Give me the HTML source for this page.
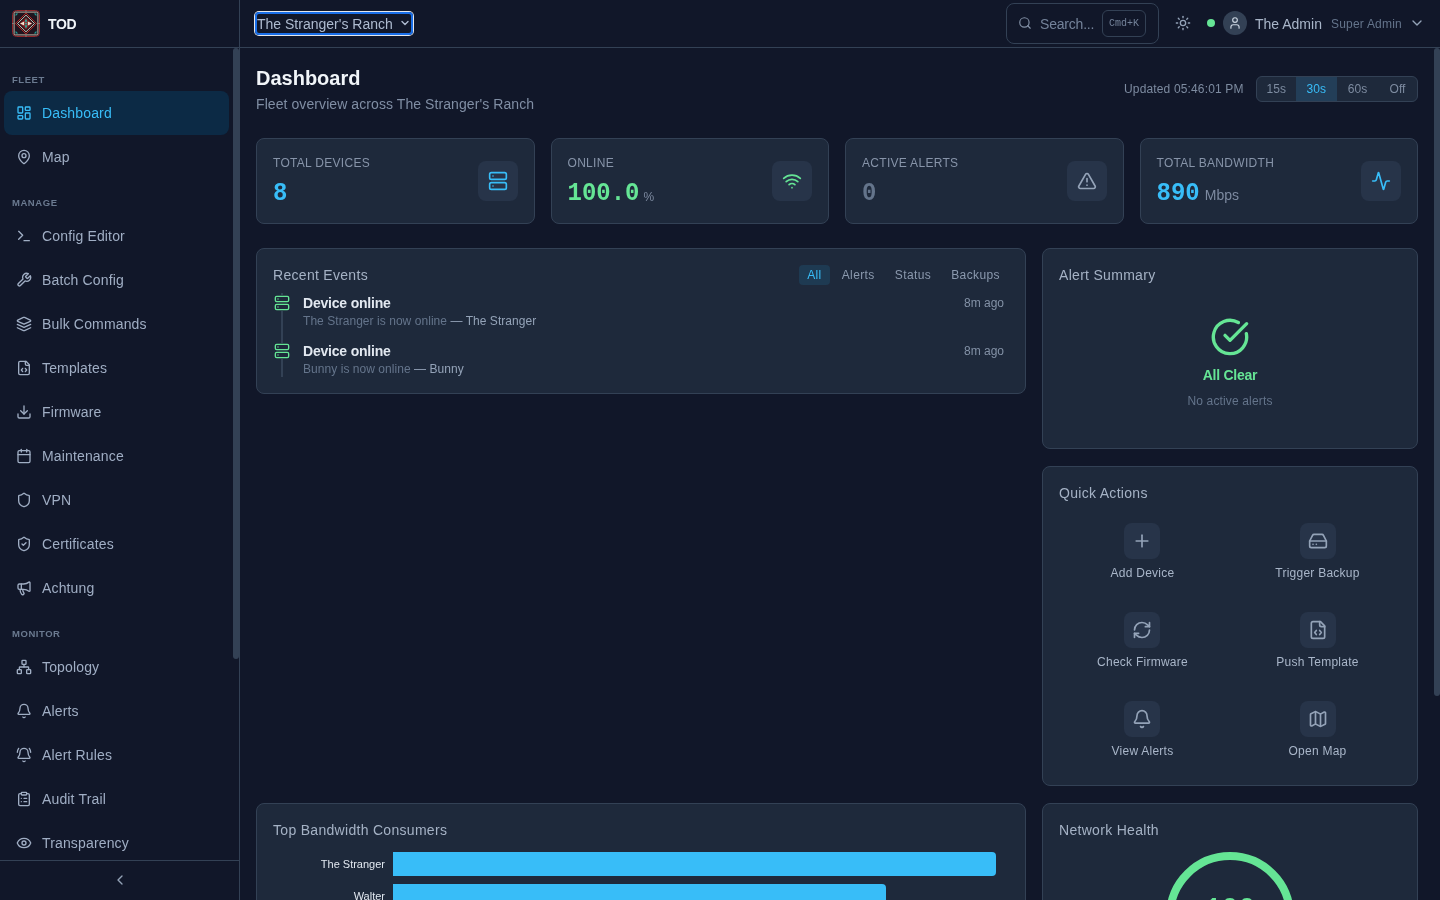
<!DOCTYPE html>
<html><head><meta charset="utf-8">
<style>
*{box-sizing:border-box;margin:0;padding:0}
html,body{width:1440px;height:900px;overflow:hidden;background:#111729;font-family:"Liberation Sans",sans-serif;color:#cbd5e1}
.abs{position:absolute}
svg.i{fill:none;stroke:currentColor;stroke-width:2;stroke-linecap:round;stroke-linejoin:round;display:block}
#hdr{position:absolute;left:0;top:0;width:1440px;height:48px;border-bottom:1px solid #334155;background:#111729}
#side{position:absolute;left:0;top:0;width:240px;height:900px;border-right:1px solid #334155;background:#111729}
.lbl{position:absolute;left:12px;font-size:9.5px;font-weight:bold;letter-spacing:0.55px;color:#6b7a90;line-height:16px;margin-top:0.5px}
.nav{position:absolute;left:4px;width:225px;height:44px;display:flex;align-items:center;padding-left:12px;font-size:14px;color:#a0aec4;border-radius:8px;letter-spacing:0.15px}
.nav svg{width:16px;height:16px;margin-right:10px;flex:none}
.nav.act{background:#0c2a45;color:#38bdf8}
.card{position:absolute;background:#1e293b;border:1px solid #334155;border-radius:8px}
.stat{top:138px;height:86px;width:278.5px}
.stat .t{position:absolute;left:16px;top:16px;font-size:12px;line-height:16px;color:#8794a9;letter-spacing:0.3px}
.stat .v{position:absolute;left:16px;top:38.5px;transform:scaleY(1.1);transform-origin:0 22.4px;font-family:"Liberation Mono",monospace;font-weight:bold;font-size:24px;line-height:32px;white-space:nowrap}
.stat .u{display:inline-block;transform:scaleY(0.91);transform-origin:0 80%;font-family:"Liberation Sans",sans-serif;font-weight:normal;font-size:13px;color:#7d8aa0;margin-left:5px}
.stat .ib{position:absolute;right:16px;top:22px;width:40px;height:40px;border-radius:8px;background:#273449;display:flex;align-items:center;justify-content:center}
.stat .ib svg{width:20px;height:20px}
.qa{position:absolute;width:167px;height:70px}
.qb{position:absolute;left:65px;top:0;width:36px;height:36px;border-radius:8px;background:#273449;color:#94a3b8;display:flex;align-items:center;justify-content:center}
.qb svg{width:20px;height:20px}
.ql{position:absolute;left:0;width:167px;top:42px;text-align:center;font-size:12px;line-height:16px;color:#a9b6c9;white-space:nowrap;letter-spacing:0.25px}
.ptitle{position:absolute;left:16px;top:16px;font-size:14px;line-height:20px;color:#a5b2c5;letter-spacing:0.3px}
</style></head><body><div id="root" style="position:absolute;left:0;top:0;width:1440px;height:900px;will-change:transform">

<!-- SIDEBAR -->
<div id="side">
  <svg class="abs" style="left:12px;top:10px" width="28" height="27" viewBox="0 0 28 27">
    <rect x="0.5" y="0.5" width="27" height="26" rx="4" fill="#20151f" stroke="#92262a" stroke-width="1"/>
    <rect x="2.1" y="2.1" width="23.8" height="22.8" rx="1.2" fill="none" stroke="#bdb3a5" stroke-width="1"/>
    <path d="M14 0v2.5M14 24.5v2.5M0 13.5h2.5M25.5 13.5h2.5" stroke="#8a8580" stroke-width="0.8"/>
    <path d="M3.6 3.6h2.6l-2.6 2.6z M24.4 3.6h-2.6l2.6 2.6z M3.6 23.4h2.6l-2.6-2.6z M24.4 23.4h-2.6l2.6-2.6z" fill="#1c9e97"/>
    <polygon points="14,3.1 24.6,13.5 14,23.9 3.4,13.5" fill="none" stroke="#b42a26" stroke-width="1"/>
    <polygon points="14,5.2 22.5,13.5 14,21.8 5.5,13.5" fill="none" stroke="#ddd3c0" stroke-width="0.9"/>
    <polygon points="14,7.2 20.4,13.5 14,19.8 7.6,13.5" fill="#7e1c1e"/>
    <polygon points="8,13.5 12.2,11.6 12.2,15.4" fill="#efe6d2"/>
    <polygon points="20,13.5 15.8,11.6 15.8,15.4" fill="#efe6d2"/>
    <polygon points="14,8.3 15.4,11.7 12.6,11.7" fill="#27b3a6"/>
    <polygon points="14,18.7 15.4,15.3 12.6,15.3" fill="#27b3a6"/>
    <rect x="12.9" y="12.5" width="2.2" height="2" fill="#27b3a6" stroke="#a3262a" stroke-width="0.5"/>
  </svg>
  <div class="abs" style="left:48px;top:14px;font-size:14px;line-height:20px;font-weight:bold;color:#f1f5f9;letter-spacing:-0.4px">TOD</div>
  <div class="abs" style="left:0;top:47px;width:240px;height:1px;background:#334155"></div>

  <div class="lbl" style="top:71px">FLEET</div>
  <div class="nav act" style="top:91px"><svg class="i" viewBox="0 0 24 24"><rect width="7" height="9" x="3" y="3" rx="1"/><rect width="7" height="5" x="14" y="3" rx="1"/><rect width="7" height="9" x="14" y="12" rx="1"/><rect width="7" height="5" x="3" y="16" rx="1"/></svg>Dashboard</div>
  <div class="nav" style="top:135px"><svg class="i" viewBox="0 0 24 24"><path d="M20 10c0 4.993-5.539 10.193-7.399 11.799a1 1 0 0 1-1.202 0C9.539 20.193 4 14.993 4 10a8 8 0 0 1 16 0"/><circle cx="12" cy="10" r="3"/></svg>Map</div>

  <div class="lbl" style="top:194px">MANAGE</div>
  <div class="nav" style="top:214px"><svg class="i" viewBox="0 0 24 24"><polyline points="4 17 10 11 4 5"/><line x1="12" x2="20" y1="19" y2="19"/></svg>Config Editor</div>
  <div class="nav" style="top:258px"><svg class="i" viewBox="0 0 24 24"><path d="M14.7 6.3a1 1 0 0 0 0 1.4l1.6 1.6a1 1 0 0 0 1.4 0l3.77-3.77a6 6 0 0 1-7.94 7.94l-6.91 6.91a2.120 2.120 0 0 1-3-3l6.91-6.91a6 6 0 0 1 7.94-7.940l-3.76 3.76z"/></svg>Batch Config</div>
  <div class="nav" style="top:302px"><svg class="i" viewBox="0 0 24 24"><path d="M12.83 2.18a2 2 0 0 0-1.66 0L2.6 6.08a1 1 0 0 0 0 1.83l8.58 3.91a2 2 0 0 0 1.66 0l8.58-3.9a1 1 0 0 0 0-1.83Z"/><path d="m22 17.65-9.17 4.16a2 2 0 0 1-1.66 0L2 17.65"/><path d="m22 12.65-9.17 4.160a2 2 0 0 1-1.66 0L2 12.65"/></svg>Bulk Commands</div>
  <div class="nav" style="top:346px"><svg class="i" viewBox="0 0 24 24"><path d="M10 12.5 8 15l2 2.5"/><path d="m14 12.5 2 2.5-2 2.5"/><path d="M14 2v4a2 2 0 0 0 2 2h4"/><path d="M15 2H6a2 2 0 0 0-2 2v16a2 2 0 0 0 2 2h12a2 2 0 0 0 2-2V7z"/></svg>Templates</div>
  <div class="nav" style="top:390px"><svg class="i" viewBox="0 0 24 24"><path d="M21 15v4a2 2 0 0 1-2 2H5a2 2 0 0 1-2-2v-4"/><polyline points="7 10 12 15 17 10"/><line x1="12" x2="12" y1="15" y2="3"/></svg>Firmware</div>
  <div class="nav" style="top:434px"><svg class="i" viewBox="0 0 24 24"><path d="M8 2v4"/><path d="M16 2v4"/><rect width="18" height="18" x="3" y="4" rx="2"/><path d="M3 10h18"/></svg>Maintenance</div>
  <div class="nav" style="top:478px"><svg class="i" viewBox="0 0 24 24"><path d="M20 13c0 5-3.5 7.5-7.66 8.95a1 1 0 0 1-.67-.01C7.5 20.5 4 18 4 13V6a1 1 0 0 1 1-1c2 0 4.5-1.2 6.24-2.72a1.17 1.17 0 0 1 1.52 0C14.51 3.81 17 5 19 5a1 1 0 0 1 1 1z"/></svg>VPN</div>
  <div class="nav" style="top:522px"><svg class="i" viewBox="0 0 24 24"><path d="M20 13c0 5-3.5 7.5-7.66 8.95a1 1 0 0 1-.67-.01C7.5 20.5 4 18 4 13V6a1 1 0 0 1 1-1c2 0 4.5-1.2 6.24-2.72a1.17 1.17 0 0 1 1.52 0C14.51 3.81 17 5 19 5a1 1 0 0 1 1 1z"/><path d="m9 12 2 2 4-4"/></svg>Certificates</div>
  <div class="nav" style="top:566px"><svg class="i" viewBox="0 0 24 24"><path d="M11 6a13 13 0 0 0 8.4-2.8A1 1 0 0 1 21 4v12a1 1 0 0 1-1.6.8A13 13 0 0 0 11 14H5a2 2 0 0 1-2-2V8a2 2 0 0 1 2-2z"/><path d="M6 14a12 12 0 0 0 2.4 7.2 2 2 0 0 0 3.2-2.4A8 8 0 0 1 10 14"/><path d="M8 6v8"/></svg>Achtung</div>

  <div class="lbl" style="top:625px">MONITOR</div>
  <div class="nav" style="top:645px"><svg class="i" viewBox="0 0 24 24"><rect x="16" y="16" width="6" height="6" rx="1"/><rect x="2" y="16" width="6" height="6" rx="1"/><rect x="9" y="2" width="6" height="6" rx="1"/><path d="M5 16v-3a1 1 0 0 1 1-1h12a1 1 0 0 1 1 1v3"/><path d="M12 12V8"/></svg>Topology</div>
  <div class="nav" style="top:689px"><svg class="i" viewBox="0 0 24 24"><path d="M10.268 21a2 2 0 0 0 3.464 0"/><path d="M3.262 15.326A1 1 0 0 0 4 17h16a1 1 0 0 0 .74-1.673C19.41 13.956 18 12.499 18 8A6 6 0 0 0 6 8c0 4.499-1.411 5.956-2.738 7.326"/></svg>Alerts</div>
  <div class="nav" style="top:733px"><svg class="i" viewBox="0 0 24 24"><path d="M10.268 21a2 2 0 0 0 3.464 0"/><path d="M22 8c0-2.3-.8-4.3-2-6"/><path d="M3.262 15.326A1 1 0 0 0 4 17h16a1 1 0 0 0 .74-1.673C19.41 13.956 18 12.499 18 8A6 6 0 0 0 6 8c0 4.499-1.411 5.956-2.738 7.326"/><path d="M4 2C2.8 3.7 2 5.7 2 8"/></svg>Alert Rules</div>
  <div class="nav" style="top:777px"><svg class="i" viewBox="0 0 24 24"><rect width="8" height="4" x="8" y="2" rx="1" ry="1"/><path d="M16 4h2a2 2 0 0 1 2 2v14a2 2 0 0 1-2 2H6a2 2 0 0 1-2-2V6a2 2 0 0 1 2-2h2"/><path d="M12 11h4"/><path d="M12 16h4"/><path d="M8 11h.01"/><path d="M8 16h.01"/></svg>Audit Trail</div>
  <div class="nav" style="top:821px"><svg class="i" viewBox="0 0 24 24"><path d="M2.062 12.348a1 1 0 0 1 0-.696 10.75 10.75 0 0 1 19.876 0 1 1 0 0 1 0 .696 10.75 10.75 0 0 1-19.876 0"/><circle cx="12" cy="12" r="3"/></svg>Transparency</div>

  <!-- bottom collapse -->
  <div class="abs" style="left:0;top:860px;width:239px;height:40px;background:#111729;border-top:1px solid #334155"></div>
  <svg class="i abs" style="left:112px;top:872px;width:16px;height:16px;color:#94a3b8" viewBox="0 0 24 24"><path d="m15 18-6-6 6-6"/></svg>
  <!-- sidebar scrollbar -->
  <div class="abs" style="left:233px;top:48px;width:6px;height:611px;border-radius:3px;background:#334155"></div>
</div>

<!-- HEADER (right part) -->
<div class="abs" style="left:240px;top:0;width:1200px;height:48px;border-bottom:1px solid #334155"></div>
<div class="abs" style="left:254px;top:11px;width:160px;height:25px;border-radius:5px;box-shadow:0 0 0 1px #e5e7eb inset;"></div>
<div class="abs" style="left:255px;top:12px;width:158px;height:23px;border-radius:4px;border:2px solid #1a6fe8;background:#111729"></div>
<div class="abs" style="left:257px;top:14px;font-size:14px;line-height:20px;color:#aebbd0;white-space:nowrap">The Stranger's Ranch</div>
<svg class="i abs" style="left:399px;top:17px;width:12px;height:12px;color:#aebbd0;stroke-width:2.8" viewBox="0 0 24 24"><path d="m6 9 6 6 6-6"/></svg>

<div class="abs" style="left:1006px;top:3px;width:153px;height:41px;border:1px solid #334155;border-radius:8px"></div>
<svg class="i abs" style="left:1018px;top:16px;width:14px;height:14px;color:#8391a6" viewBox="0 0 24 24"><circle cx="11" cy="11" r="8"/><path d="m21 21-4.3-4.3"/></svg>
<div class="abs" style="left:1040px;top:14px;font-size:14px;line-height:20px;color:#74839a;letter-spacing:-0.2px">Search...</div>
<div class="abs" style="left:1102px;top:10px;width:44px;height:27px;border:1px solid #334155;border-radius:6px;font-family:'Liberation Mono',monospace;font-size:10px;line-height:25px;text-align:center;color:#74839a">Cmd+K</div>
<svg class="i abs" style="left:1175px;top:15px;width:16px;height:16px;color:#94a3b8" viewBox="0 0 24 24"><circle cx="12" cy="12" r="4"/><path d="M12 2v2"/><path d="M12 20v2"/><path d="m4.93 4.93 1.41 1.41"/><path d="m17.66 17.66 1.41 1.41"/><path d="M2 12h2"/><path d="M20 12h2"/><path d="m6.34 17.66-1.41 1.41"/><path d="m19.07 4.93-1.41 1.41"/></svg>
<div class="abs" style="left:1207px;top:19px;width:8px;height:8px;border-radius:50%;background:#65e595"></div>
<div class="abs" style="left:1223px;top:11px;width:24px;height:24px;border-radius:50%;background:#334155"></div>
<svg class="i abs" style="left:1228px;top:16px;width:14px;height:14px;color:#cbd5e1" viewBox="0 0 24 24"><path d="M19 21v-2a4 4 0 0 0-4-4H9a4 4 0 0 0-4 4v2"/><circle cx="12" cy="7" r="4"/></svg>
<div class="abs" style="left:1255px;top:14px;font-size:14px;line-height:20px;color:#a9b6c9;white-space:nowrap">The Admin</div>
<div class="abs" style="left:1331px;top:15px;font-size:12px;line-height:16px;color:#64748b;white-space:nowrap;top:16px;letter-spacing:0.2px">Super Admin</div>
<svg class="i abs" style="left:1409px;top:15px;width:16px;height:16px;color:#94a3b8" viewBox="0 0 24 24"><path d="m6 9 6 6 6-6"/></svg>

<!-- main scrollbar -->
<div class="abs" style="left:1434px;top:48px;width:6px;height:648px;border-radius:3px;background:#334155"></div>

<!-- PAGE HEADER -->
<div class="abs" style="left:256px;top:64px;font-size:20px;line-height:28px;font-weight:bold;color:#f1f5f9">Dashboard</div>
<div class="abs" style="left:256px;top:94px;font-size:14px;line-height:20px;color:#808ea4;white-space:nowrap;letter-spacing:0.08px">Fleet overview across The Stranger's Ranch</div>
<div class="abs" style="left:1124px;top:81px;font-size:12px;line-height:16px;color:#7d8ba0;white-space:nowrap;letter-spacing:0.15px">Updated 05:46:01 PM</div>
<div class="abs" style="left:1256px;top:76px;width:162px;height:26px;border:1px solid #334155;border-radius:6px;background:#1e293b;display:flex;overflow:hidden;font-size:12px;line-height:24px;color:#7d8ba0;text-align:center">
  <div style="width:38.5px">15s</div><div style="width:41.5px;background:#233e58;color:#38bdf8">30s</div><div style="width:41px">60s</div><div style="width:39px">Off</div>
</div>

<!-- STAT CARDS -->
<div class="card stat" style="left:256px">
  <div class="t">TOTAL DEVICES</div>
  <div class="v" style="color:#38bdf8">8</div>
  <div class="ib" style="color:#38bdf8"><svg class="i" viewBox="0 0 24 24"><rect width="20" height="8" x="2" y="2" rx="2" ry="2"/><rect width="20" height="8" x="2" y="14" rx="2" ry="2"/><line x1="6" x2="6.01" y1="6" y2="6"/><line x1="6" x2="6.01" y1="18" y2="18"/></svg></div>
</div>
<div class="card stat" style="left:550.5px">
  <div class="t">ONLINE</div>
  <div class="v" style="color:#65e595">100.0<span class="u" style="font-size:12px;margin-left:4px">%</span></div>
  <div class="ib" style="color:#65e595"><svg class="i" viewBox="0 0 24 24"><path d="M12 20h.01"/><path d="M2 8.82a15 15 0 0 1 20 0"/><path d="M5 12.859a10 10 0 0 1 14 0"/><path d="M8.5 16.429a5 5 0 0 1 7 0"/></svg></div>
</div>
<div class="card stat" style="left:845px">
  <div class="t">ACTIVE ALERTS</div>
  <div class="v" style="color:#64748b">0</div>
  <div class="ib" style="color:#94a3b8"><svg class="i" viewBox="0 0 24 24"><path d="m21.73 18-8-14a2 2 0 0 0-3.48 0l-8 14A2 2 0 0 0 4 21h16a2 2 0 0 0 1.73-3"/><path d="M12 9v4"/><path d="M12 17h.01"/></svg></div>
</div>
<div class="card stat" style="left:1139.5px">
  <div class="t">TOTAL BANDWIDTH</div>
  <div class="v" style="color:#38bdf8">890<span class="u" style="font-size:14px">Mbps</span></div>
  <div class="ib" style="color:#38bdf8"><svg class="i" viewBox="0 0 24 24"><path d="M22 12h-2.48a2 2 0 0 0-1.93 1.46l-2.35 8.36a.25.25 0 0 1-.48 0L9.24 2.18a.25.25 0 0 0-.48 0l-2.35 8.36A2 2 0 0 1 4.49 12H2"/></svg></div>
</div>

<!-- RECENT EVENTS -->
<div class="card" style="left:256px;top:248px;width:770px;height:146px">
  <div class="ptitle">Recent Events</div>
  <div class="abs" style="right:17px;top:16px;display:flex;gap:4px;font-size:12px;line-height:20px;color:#8b99ae;letter-spacing:0.4px">
    <div style="padding:0 8px;border-radius:4px;background:#1e3a52;color:#38bdf8">All</div>
    <div style="padding:0 8px">Alerts</div>
    <div style="padding:0 8px">Status</div>
    <div style="padding:0 8px">Backups</div>
  </div>
  <div class="abs" style="left:24px;top:44px;width:2px;height:84px;background:#334155"></div>
  <div class="abs" style="left:17px;top:46px;width:16px;height:16px;background:#1e293b;color:#65e595"><svg class="i" style="width:16px;height:16px" viewBox="0 0 24 24"><rect width="20" height="8" x="2" y="2" rx="2" ry="2"/><rect width="20" height="8" x="2" y="14" rx="2" ry="2"/><line x1="6" x2="6.01" y1="6" y2="6"/><line x1="6" x2="6.01" y1="18" y2="18"/></svg></div>
  <div class="abs" style="left:46px;top:44px;font-size:14px;line-height:20px;font-weight:bold;color:#e2e8f0;letter-spacing:-0.2px">Device online</div>
  <div class="abs" style="left:46px;top:64px;font-size:12px;line-height:16px;color:#64748b;white-space:nowrap;letter-spacing:0.05px">The Stranger is now online <span style="color:#94a3b8">— The Stranger</span></div>
  <div class="abs" style="right:21px;top:46px;font-size:12px;line-height:16px;color:#8391a6">8m ago</div>
  <div class="abs" style="left:17px;top:94px;width:16px;height:16px;background:#1e293b;color:#65e595"><svg class="i" style="width:16px;height:16px" viewBox="0 0 24 24"><rect width="20" height="8" x="2" y="2" rx="2" ry="2"/><rect width="20" height="8" x="2" y="14" rx="2" ry="2"/><line x1="6" x2="6.01" y1="6" y2="6"/><line x1="6" x2="6.01" y1="18" y2="18"/></svg></div>
  <div class="abs" style="left:46px;top:92px;font-size:14px;line-height:20px;font-weight:bold;color:#e2e8f0;letter-spacing:-0.2px">Device online</div>
  <div class="abs" style="left:46px;top:112px;font-size:12px;line-height:16px;color:#64748b;white-space:nowrap;letter-spacing:0.05px">Bunny is now online <span style="color:#94a3b8">— Bunny</span></div>
  <div class="abs" style="right:21px;top:94px;font-size:12px;line-height:16px;color:#8391a6">8m ago</div>
</div>

<!-- ALERT SUMMARY -->
<div class="card" style="left:1042px;top:248px;width:376px;height:201px">
  <div class="ptitle">Alert Summary</div>
  <svg class="i abs" style="left:167px;top:68px;width:40px;height:40px;color:#65e595" viewBox="0 0 24 24"><path d="M21.801 10A10 10 0 1 1 17 3.335"/><path d="m9 11 3 3L22 4"/></svg>
  <div class="abs" style="left:0;width:374px;top:116px;text-align:center;font-size:14px;line-height:20px;font-weight:bold;color:#65e595;letter-spacing:-0.25px">All Clear</div>
  <div class="abs" style="left:0;width:374px;top:144px;text-align:center;font-size:12px;line-height:16px;color:#64748b;letter-spacing:0.15px">No active alerts</div>
</div>

<!-- QUICK ACTIONS -->
<div class="card" style="left:1042px;top:466px;width:376px;height:320px">
  <div class="ptitle">Quick Actions</div>
  <div class="qa" style="left:16px;top:56px"><div class="qb"><svg class="i" viewBox="0 0 24 24"><path d="M5 12h14"/><path d="M12 5v14"/></svg></div><div class="ql">Add Device</div></div>
  <div class="qa" style="left:191px;top:56px"><div class="qb" style="left:66px"><svg class="i" viewBox="0 0 24 24"><line x1="22" x2="2" y1="12" y2="12"/><path d="M5.45 5.11 2 12v6a2 2 0 0 0 2 2h16a2 2 0 0 0 2-2v-6l-3.45-6.89A2 2 0 0 0 16.76 4H7.240a2 2 0 0 0-1.79 1.11z"/><line x1="6" x2="6.01" y1="16" y2="16"/><line x1="10" x2="10.01" y1="16" y2="16"/></svg></div><div class="ql">Trigger Backup</div></div>
  <div class="qa" style="left:16px;top:145px"><div class="qb"><svg class="i" viewBox="0 0 24 24"><path d="M3 12a9 9 0 0 1 9-9 9.75 9.75 0 0 1 6.74 2.740L21 8"/><path d="M21 3v5h-5"/><path d="M21 12a9 9 0 0 1-9 9 9.75 9.75 0 0 1-6.74-2.74L3 16"/><path d="M8 16H3v5"/></svg></div><div class="ql">Check Firmware</div></div>
  <div class="qa" style="left:191px;top:145px"><div class="qb" style="left:66px"><svg class="i" viewBox="0 0 24 24"><path d="M10 12.5 8 15l2 2.5"/><path d="m14 12.5 2 2.5-2 2.5"/><path d="M14 2v4a2 2 0 0 0 2 2h4"/><path d="M15 2H6a2 2 0 0 0-2 2v16a2 2 0 0 0 2 2h12a2 2 0 0 0 2-2V7z"/></svg></div><div class="ql">Push Template</div></div>
  <div class="qa" style="left:16px;top:234px"><div class="qb"><svg class="i" viewBox="0 0 24 24"><path d="M10.268 21a2 2 0 0 0 3.464 0"/><path d="M3.262 15.326A1 1 0 0 0 4 17h16a1 1 0 0 0 .74-1.673C19.41 13.956 18 12.499 18 8A6 6 0 0 0 6 8c0 4.499-1.411 5.956-2.738 7.326"/></svg></div><div class="ql">View Alerts</div></div>
  <div class="qa" style="left:191px;top:234px"><div class="qb" style="left:66px"><svg class="i" viewBox="0 0 24 24"><path d="M14.106 5.553a2 2 0 0 0 1.788 0l3.659-1.83A1 1 0 0 1 21 4.619v12.764a1 1 0 0 1-.553.894l-4.553 2.277a2 2 0 0 1-1.788 0l-4.212-2.106a2 2 0 0 0-1.788 0l-3.659 1.830A1 1 0 0 1 3 19.381V6.618a1 1 0 0 1 .553-.894l4.553-2.277a2 2 0 0 1 1.788 0z"/><path d="M15 5.764v15"/><path d="M9 3.236v15"/></svg></div><div class="ql">Open Map</div></div>
</div>

<!-- BANDWIDTH -->
<div class="card" style="left:256px;top:803px;width:770px;height:120px">
  <div class="ptitle">Top Bandwidth Consumers</div>
  <div class="abs" style="left:0;width:128px;top:51.5px;text-align:right;font-size:11px;line-height:16px;color:#e2e8f0">The Stranger</div>
  <div class="abs" style="left:136px;top:48px;width:603px;height:24px;background:#38bdf8;border-radius:0 4px 4px 0"></div>
  <div class="abs" style="left:0;width:128px;top:83.5px;text-align:right;font-size:11px;line-height:16px;color:#e2e8f0">Walter</div>
  <div class="abs" style="left:136px;top:80px;width:493px;height:24px;background:#38bdf8;border-radius:0 4px 4px 0"></div>
</div>

<!-- NETWORK HEALTH -->
<div class="card" style="left:1042px;top:803px;width:376px;height:120px">
  <div class="ptitle">Network Health</div>
</div>
<svg class="abs" style="left:1160px;top:846px" width="140" height="140" viewBox="0 0 140 140"><circle cx="70" cy="70" r="60" fill="none" stroke="#65e595" stroke-width="8"/></svg>
<div class="abs" style="left:1180px;top:893px;width:100px;text-align:center;font-family:'Liberation Mono',monospace;font-weight:bold;font-size:28px;line-height:32px;color:#65e595">100</div>

</div></body></html>
